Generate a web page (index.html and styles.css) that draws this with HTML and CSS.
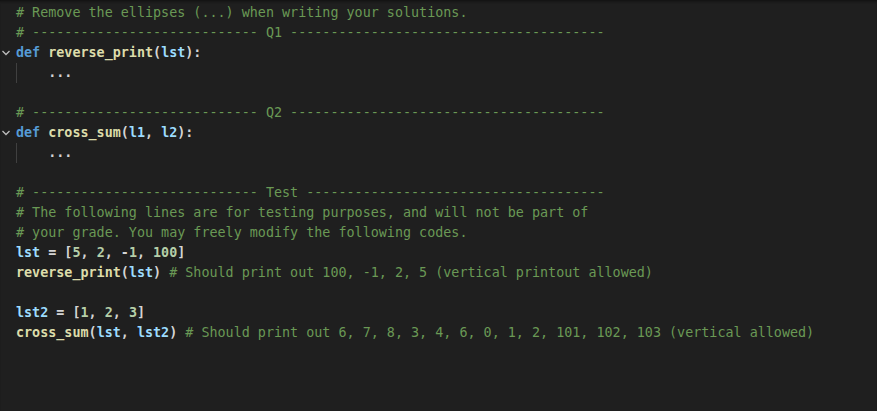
FILE: index.html
```html
<!DOCTYPE html>
<html>
<head>
<meta charset="utf-8">
<link rel="stylesheet" href="styles.css">
</head>
<body>
<div class="editor">
  <div class="line"><span class="gutter"></span><span class="code"><span class="c"># Remove the ellipses (...) when writing your solutions.</span></span></div>
  <div class="line"><span class="gutter"></span><span class="code"><span class="c"># ---------------------------- Q1 ---------------------------------------</span></span></div>
  <div class="line"><span class="gutter"><svg class="chev" width="10" height="8" viewBox="0 0 10 8"><path d="M1.5 2 L5 5.5 L8.5 2" fill="none" stroke="#bdbdbd" stroke-width="1.3"/></svg></span><span class="code"><span class="k">def</span> <span class="f">reverse_print</span><span class="p">(</span><span class="v">lst</span><span class="p">):</span></span></div>
  <div class="line"><span class="gutter"></span><span class="code"><span class="guide">    </span><span class="p">...</span></span></div>
  <div class="line"><span class="gutter"></span><span class="code"> </span></div>
  <div class="line"><span class="gutter"></span><span class="code"><span class="c"># ---------------------------- Q2 ---------------------------------------</span></span></div>
  <div class="line"><span class="gutter"><svg class="chev" width="10" height="8" viewBox="0 0 10 8"><path d="M1.5 2 L5 5.5 L8.5 2" fill="none" stroke="#bdbdbd" stroke-width="1.3"/></svg></span><span class="code"><span class="k">def</span> <span class="f">cross_sum</span><span class="p">(</span><span class="v">l1</span><span class="p">, </span><span class="v">l2</span><span class="p">):</span></span></div>
  <div class="line"><span class="gutter"></span><span class="code"><span class="guide">    </span><span class="p">...</span></span></div>
  <div class="line"><span class="gutter"></span><span class="code"> </span></div>
  <div class="line"><span class="gutter"></span><span class="code"><span class="c"># ---------------------------- Test -------------------------------------</span></span></div>
  <div class="line"><span class="gutter"></span><span class="code"><span class="c"># The following lines are for testing purposes, and will not be part of</span></span></div>
  <div class="line"><span class="gutter"></span><span class="code"><span class="c"># your grade. You may freely modify the following codes.</span></span></div>
  <div class="line"><span class="gutter"></span><span class="code"><span class="v">lst</span><span class="p"> = [</span><span class="n">5</span><span class="p">, </span><span class="n">2</span><span class="p">, -</span><span class="n">1</span><span class="p">, </span><span class="n">100</span><span class="p">]</span></span></div>
  <div class="line"><span class="gutter"></span><span class="code"><span class="f">reverse_print</span><span class="p">(</span><span class="v">lst</span><span class="p">) </span><span class="c"># Should print out 100, -1, 2, 5 (vertical printout allowed)</span></span></div>
  <div class="line"><span class="gutter"></span><span class="code"> </span></div>
  <div class="line"><span class="gutter"></span><span class="code"><span class="v">lst2</span><span class="p"> = [</span><span class="n">1</span><span class="p">, </span><span class="n">2</span><span class="p">, </span><span class="n">3</span><span class="p">]</span></span></div>
  <div class="line"><span class="gutter"></span><span class="code"><span class="f">cross_sum</span><span class="p">(</span><span class="v">lst</span><span class="p">, </span><span class="v">lst2</span><span class="p">) </span><span class="c"># Should print out 6, 7, 8, 3, 4, 6, 0, 1, 2, 101, 102, 103 (vertical allowed)</span></span></div>
</div>
</body>
</html>
```

FILE: styles.css
```css
html, body {
  margin: 0;
  padding: 0;
  background: #1f1f1f;
  width: 877px;
  height: 411px;
  overflow: hidden;
}
.editor {
  height: 411px;
  box-sizing: border-box;
  padding-top: 3px;
  box-shadow: inset 0 3px 3px -2px #0e0e0e;
  font-family: "DejaVu Sans Mono", "Liberation Mono", monospace;
  font-size: 13.4px;
  line-height: 20px;
  color: #d4d4d4;
}
.line {
  display: flex;
  height: 20px;
  white-space: pre;
}
.gutter {
  width: 16px;
  flex: none;
  display: flex;
  align-items: center;
  justify-content: flex-start;
}
.chev {
  margin-left: 1px;
}
.code {
  font-weight: bold;
}
.guide {
  display: inline-block;
  height: 20px;
  vertical-align: top;
  border-left: 1px solid #404040;
  box-sizing: border-box;
  width: 4ch;
}
.c { color: #6a9955; font-weight: normal; }
.k { color: #569cd6; }
.f { color: #dcdcaa; }
.v { color: #9cdcfe; }
.n { color: #b5cea8; }
.p { color: #d4d4d4; }
```
